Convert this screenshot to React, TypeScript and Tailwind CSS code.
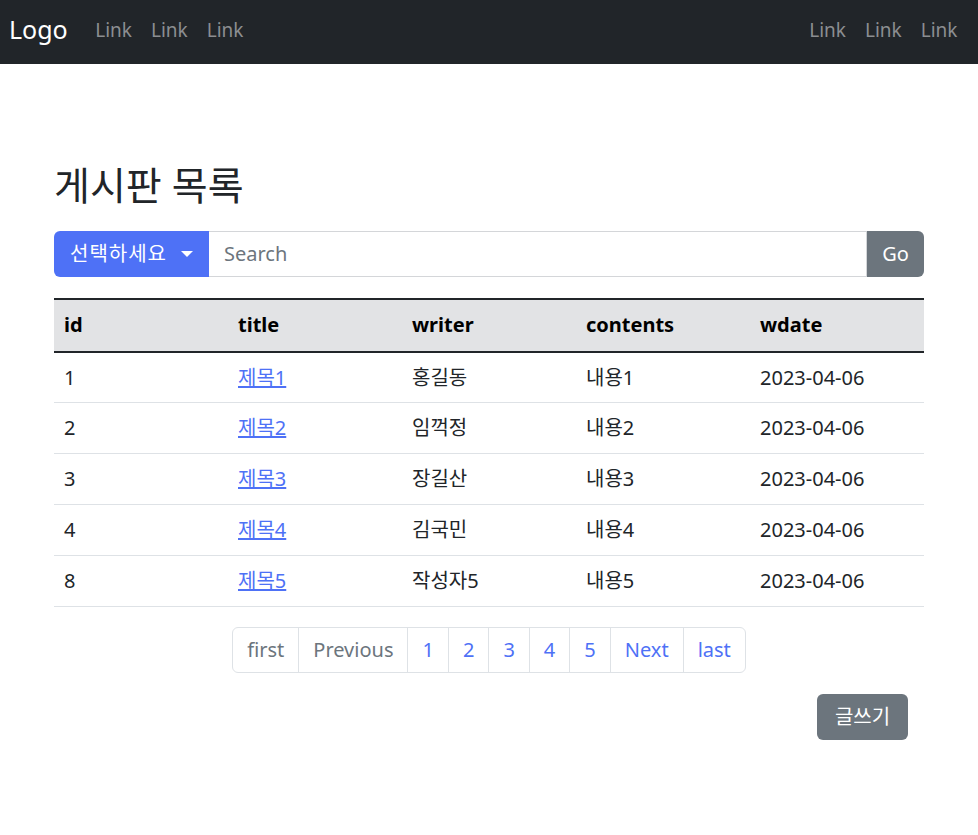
const rows = [
  { id: 1, title: '제목1', writer: '홍길동', contents: '내용1', wdate: '2023-04-06' },
  { id: 2, title: '제목2', writer: '임꺽정', contents: '내용2', wdate: '2023-04-06' },
  { id: 3, title: '제목3', writer: '장길산', contents: '내용3', wdate: '2023-04-06' },
  { id: 4, title: '제목4', writer: '김국민', contents: '내용4', wdate: '2023-04-06' },
  { id: 8, title: '제목5', writer: '작성자5', contents: '내용5', wdate: '2023-04-06' },
];

const font = { fontFamily: '"Noto Sans", "Noto Sans CJK KR", sans-serif' };

function NavLinks() {
  return (
    <div className="flex">
      {['Link', 'Link', 'Link'].map((l, i) => (
        <a key={i} href="#" className="px-[9.5px] text-[19px] text-[#8c8e91]">
          {l}
        </a>
      ))}
    </div>
  );
}

export default function App() {
  return (
    <div className="min-h-[835px] bg-white text-[20px] text-[#212529]" style={font}>
      <nav className="flex h-16 items-center justify-between bg-[#212529] pb-[4px] pl-[9px] pr-[11px]">
        <div className="flex items-center gap-[18px]">
          <span className="text-[25px] text-white">Logo</span>
          <NavLinks />
        </div>
        <NavLinks />
      </nav>

      <main className="mx-auto w-[870px] pt-[98px]">
        <h2 className="text-[39px] leading-[1.2]">게시판 목록</h2>

        <div className="mt-[22px] flex h-[46px]">
          <button className="flex items-center gap-[14px] rounded-l-md bg-[#4e71f6] pl-[16px] pr-[16px] text-white">
            <span className="tracking-[1px]">선택하세요</span>
            <span className="h-0 w-0 border-x-[6px] border-t-[6px] border-x-transparent border-t-white" />
          </button>
          <input
            placeholder="Search"
            className="min-w-0 flex-1 border border-l-0 border-[#d4d6d9] px-[15px] text-[20px] placeholder:text-[#6c757d] outline-none"
            style={font}
          />
          <button className="w-[57px] rounded-r-md bg-[#6c757d] text-white">Go</button>
        </div>

        <table className="mt-[21px] w-full table-fixed border-collapse">
          <thead>
            <tr className="h-[53px] border-y-2 border-[#212529] bg-[#e2e3e5] text-left">
              {['id', 'title', 'writer', 'contents', 'wdate'].map((h) => (
                <th key={h} className="px-[10px] font-bold text-black">
                  {h}
                </th>
              ))}
            </tr>
          </thead>
          <tbody>
            {rows.map((r) => (
              <tr key={r.id} className="h-[51px] border-b border-[#dee2e6]">
                <td className="px-[10px]">{r.id}</td>
                <td className="px-[10px]">
                  <a href="#" className="text-[#4e71f6] underline">
                    {r.title}
                  </a>
                </td>
                <td className="px-[10px]">{r.writer}</td>
                <td className="px-[10px]">{r.contents}</td>
                <td className="px-[10px]">{r.wdate}</td>
              </tr>
            ))}
          </tbody>
        </table>

        <div className="mt-[20px] flex justify-center">
          <ul className="flex h-[46px] overflow-hidden rounded-md border border-[#dee2e6]">
            {['first', 'Previous', '1', '2', '3', '4', '5', 'Next', 'last'].map((p, i) => (
              <li
                key={p}
                className={`flex items-center border-[#dee2e6] px-[14px] ${i > 0 ? 'border-l' : ''} ${
                  i < 2 ? 'text-[#6c757d]' : 'text-[#4e71f6]'
                }`}
              >
                {p}
              </li>
            ))}
          </ul>
        </div>

        <div className="mt-[21px] flex justify-end pr-4">
          <button className="h-[46px] w-[91px] rounded-md bg-[#6c757d] text-white">글쓰기</button>
        </div>
      </main>
    </div>
  );
}
